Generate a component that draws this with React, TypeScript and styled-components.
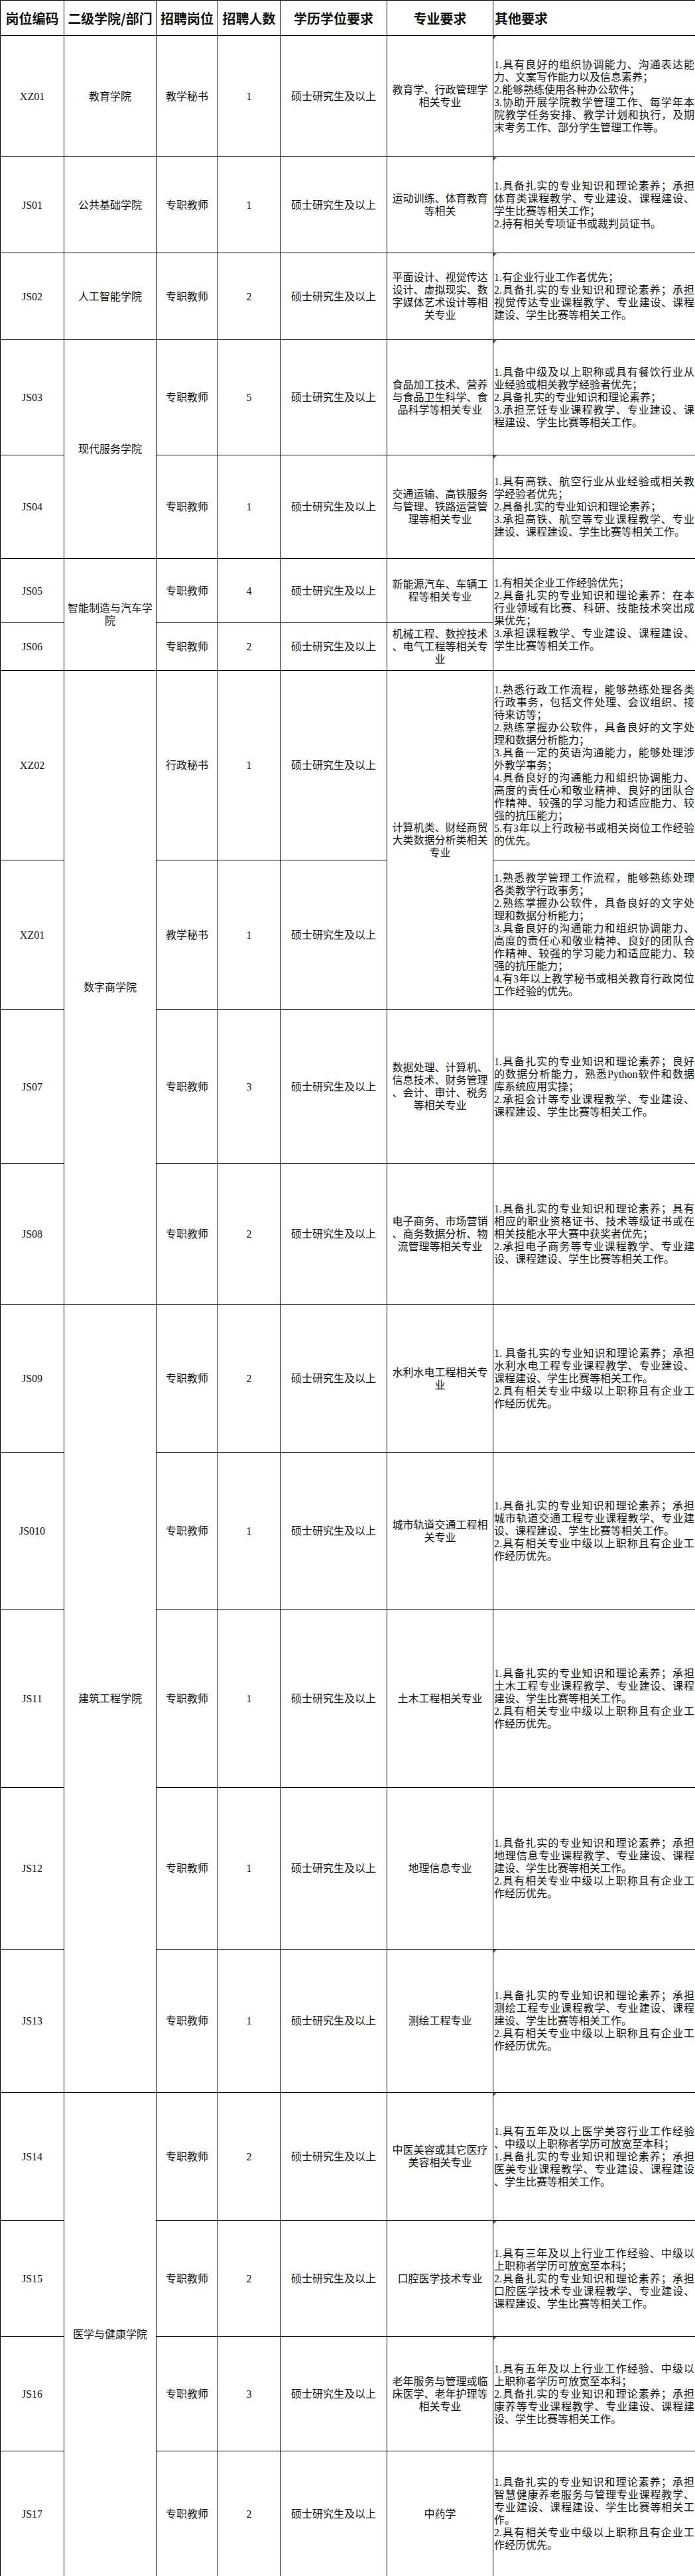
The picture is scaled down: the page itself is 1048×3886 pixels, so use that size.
import styled, { createGlobalStyle } from "styled-components";

const GlobalStyle = createGlobalStyle`
  html, body {
    margin: 0;
    padding: 0;
    background: #fff;
  }
  body {
    font-family: "Liberation Serif", "Noto Sans CJK SC", serif;
    color: #111;
  }
`;

const Sheet = styled.table`
  width: 1048px;
  border-collapse: collapse;
  table-layout: fixed;
  font-size: 16px;
  line-height: 19px;
`;

const Col = styled.col<{ $w: number }>`
  width: ${(p) => p.$w}px;
`;

const Row = styled.tr<{ $h: number }>`
  height: ${(p) => p.$h}px;
`;

const Head = styled.th<{ $left?: boolean }>`
  border: 1px solid #000;
  padding: 0 2px;
  font-family: "Noto Sans CJK SC", sans-serif;
  font-weight: 700;
  font-size: 20px;
  text-align: ${(p) => (p.$left ? "left" : "center")};
  vertical-align: middle;
  white-space: nowrap;
`;

const Cell = styled.td`
  border: 1px solid #000;
  padding: 0 2px;
  text-align: center;
  vertical-align: middle;
`;

const Other = styled(Cell)<{ $flag?: boolean }>`
  position: relative;
  padding: 0 1px;
  text-align: left;
  &::before {
    content: "";
    display: ${(p) => (p.$flag ? "block" : "none")};
    position: absolute;
    top: 0;
    left: 0;
    border-top: 5px solid #1e8a1e;
    border-right: 5px solid transparent;
  }
`;

const Line = styled.span<{ $full: boolean }>`
  display: block;
  text-align: ${(p) => (p.$full ? "justify" : "left")};
  text-align-last: ${(p) => (p.$full ? "justify" : "left")};
`;

interface IJob {
  code: string;
  post: string;
  count: number;
  h: number;
  college?: [string, number];
  major?: string[];
  majorSpan?: number;
  other?: string[];
  otherSpan?: number;
  flag?: boolean;
}

const S = "2.具有相关专业中级以上职称且有企业工";
const T = "作经历优先。";
const base = "1.具备扎实的专业知识和理论素养；承担";

const jobs: IJob[] = [
  {
    code: "XZ01", post: "教学秘书", count: 1, h: 183, college: ["教育学院", 1], flag: true,
    major: ["教育学、行政管理学", "相关专业"],
    other: [
      "1.具有良好的组织协调能力、沟通表达能",
      "力、文案写作能力以及信息素养；",
      "2.能够熟练使用各种办公软件；",
      "3.协助开展学院教学管理工作、每学年本",
      "院教学任务安排、教学计划和执行，及期",
      "末考务工作、部分学生管理工作等。",
    ],
  },
  {
    code: "JS01", post: "专职教师", count: 1, h: 145, college: ["公共基础学院", 1], flag: true,
    major: ["运动训练、体育教育", "等相关"],
    other: [base, "体育类课程教学、专业建设、课程建设、", "学生比赛等相关工作；", "2.持有相关专项证书或裁判员证书。"],
  },
  {
    code: "JS02", post: "专职教师", count: 2, h: 131, college: ["人工智能学院", 1], flag: true,
    major: ["平面设计、视觉传达", "设计、虚拟现实、数", "字媒体艺术设计等相", "关专业"],
    other: ["1.有企业行业工作者优先；", "2.具备扎实的专业知识和理论素养；承担", "视觉传达专业课程教学、专业建设、课程", "建设、学生比赛等相关工作。"],
  },
  {
    code: "JS03", post: "专职教师", count: 5, h: 174, college: ["现代服务学院", 2], flag: true,
    major: ["食品加工技术、营养", "与食品卫生科学、食", "品科学等相关专业"],
    other: [
      "1.具备中级及以上职称或具有餐饮行业从",
      "业经验或相关教学经验者优先；",
      "2.具备扎实的专业知识和理论素养；",
      "3.承担烹饪专业课程教学、专业建设、课",
      "程建设、学生比赛等相关工作。",
    ],
  },
  {
    code: "JS04", post: "专职教师", count: 1, h: 156, flag: true,
    major: ["交通运输、高铁服务", "与管理、铁路运营管", "理等相关专业"],
    other: [
      "1.具有高铁、航空行业从业经验或相关教",
      "学经验者优先；",
      "2.具备扎实的专业知识和理论素养；",
      "3.承担高铁、航空等专业课程教学、专业",
      "建设、课程建设、学生比赛等相关工作。",
    ],
  },
  {
    code: "JS05", post: "专职教师", count: 4, h: 97, college: ["智能制造与汽车学院", 2],
    major: ["新能源汽车、车辆工", "程等相关专业"],
    otherSpan: 2,
    other: [
      "1.有相关企业工作经验优先；",
      "2.具备扎实的专业知识和理论素养：在本",
      "行业领域有比赛、科研、技能技术突出成",
      "果优先；",
      "3.承担课程教学、专业建设、课程建设、",
      "学生比赛等相关工作。",
    ],
  },
  {
    code: "JS06", post: "专职教师", count: 2, h: 72,
    major: ["机械工程、数控技术", "、电气工程等相关专", "业"],
  },
  {
    code: "XZ02", post: "行政秘书", count: 1, h: 286, college: ["数字商学院", 4],
    majorSpan: 2,
    major: ["计算机类、财经商贸", "大类数据分析类相关", "专业"],
    other: [
      "1.熟悉行政工作流程，能够熟练处理各类",
      "行政事务，包括文件处理、会议组织、接",
      "待来访等；",
      "2.熟练掌握办公软件，具备良好的文字处",
      "理和数据分析能力；",
      "3.具备一定的英语沟通能力，能够处理涉",
      "外教学事务；",
      "4.具备良好的沟通能力和组织协调能力、",
      "高度的责任心和敬业精神、良好的团队合",
      "作精神、较强的学习能力和适应能力、较",
      "强的抗压能力；",
      "5.有3年以上行政秘书或相关岗位工作经验",
      "的优先。",
    ],
  },
  {
    code: "XZ01", post: "教学秘书", count: 1, h: 225,
    other: [
      "1.熟悉教学管理工作流程，能够熟练处理",
      "各类教学行政事务；",
      "2.熟练掌握办公软件，具备良好的文字处",
      "理和数据分析能力；",
      "3.具备良好的沟通能力和组织协调能力、",
      "高度的责任心和敬业精神、良好的团队合",
      "作精神、较强的学习能力和适应能力、较",
      "强的抗压能力；",
      "4.有3年以上教学秘书或相关教育行政岗位",
      "工作经验的优先。",
    ],
  },
  {
    code: "JS07", post: "专职教师", count: 3, h: 233,
    major: ["数据处理、计算机、", "信息技术、财务管理", "、会计、审计、税务", "等相关专业"],
    other: [
      "1.具备扎实的专业知识和理论素养；良好",
      "的数据分析能力，熟悉Python软件和数据",
      "库系统应用实操；",
      "2.承担会计等专业课程教学、专业建设、",
      "课程建设、学生比赛等相关工作。",
    ],
  },
  {
    code: "JS08", post: "专职教师", count: 2, h: 212,
    major: ["电子商务、市场营销", "、商务数据分析、物", "流管理等相关专业"],
    other: [
      "1.具备扎实的专业知识和理论素养；具有",
      "相应的职业资格证书、技术等级证书或在",
      "相关技能水平大赛中获奖者优先；",
      "2.承担电子商务等专业课程教学、专业建",
      "设、课程建设、学生比赛等相关工作。",
    ],
  },
  {
    code: "JS09", post: "专职教师", count: 2, h: 224, college: ["建筑工程学院", 5],
    major: ["水利水电工程相关专", "业"],
    other: ["1. 具备扎实的专业知识和理论素养；承担", "水利水电工程专业课程教学、专业建设、", "课程建设、学生比赛等相关工作。", S, T],
  },
  {
    code: "JS010", post: "专职教师", count: 1, h: 236,
    major: ["城市轨道交通工程相", "关专业"],
    other: [base, "城市轨道交通工程专业课程教学、专业建", "设、课程建设、学生比赛等相关工作。", S, T],
  },
  {
    code: "JS11", post: "专职教师", count: 1, h: 269,
    major: ["土木工程相关专业"],
    other: [base, "土木工程专业课程教学、专业建设、课程", "建设、学生比赛等相关工作。", S, T],
  },
  {
    code: "JS12", post: "专职教师", count: 1, h: 244,
    major: ["地理信息专业"],
    other: [base, "地理信息专业课程教学、专业建设、课程", "建设、学生比赛等相关工作。", S, T],
  },
  {
    code: "JS13", post: "专职教师", count: 1, h: 216, flag: true,
    major: ["测绘工程专业"],
    other: [base, "测绘工程专业课程教学、专业建设、课程", "建设、学生比赛等相关工作。", S, T],
  },
  {
    code: "JS14", post: "专职教师", count: 2, h: 193, college: ["医学与健康学院", 4], flag: true,
    major: ["中医美容或其它医疗", "美容相关专业"],
    other: [
      "1.具有五年及以上医学美容行业工作经验",
      "、中级以上职称者学历可放宽至本科；",
      base,
      "医美专业课程教学、专业建设、课程建设",
      "、学生比赛等相关工作。",
    ],
  },
  {
    code: "JS15", post: "专职教师", count: 2, h: 175, flag: true,
    major: ["口腔医学技术专业"],
    other: [
      "1.具有三年及以上行业工作经验、中级以",
      "上职称者学历可放宽至本科；",
      "2.具备扎实的专业知识和理论素养；承担",
      "口腔医学技术专业课程教学、专业建设、",
      "课程建设、学生比赛等相关工作。",
    ],
  },
  {
    code: "JS16", post: "专职教师", count: 3, h: 173, flag: true,
    major: ["老年服务与管理或临", "床医学、老年护理等", "相关专业"],
    other: [
      "1.具有五年及以上行业工作经验、中级以",
      "上职称者学历可放宽至本科；",
      "2.具备扎实的专业知识和理论素养；承担",
      "康养等专业课程教学、专业建设、课程建",
      "设、学生比赛等相关工作。",
    ],
  },
  {
    code: "JS17", post: "专职教师", count: 2, h: 189,
    major: ["中药学"],
    other: [
      base,
      "智慧健康养老服务与管理专业课程教学、",
      "专业建设、课程建设、学生比赛等相关工",
      "作。",
      S,
      T,
    ],
  },
];

const widths = [96, 139, 93, 94, 161, 160, 305];

// a wrapped line is stretched to the cell edge, the last line of an item is not
const isFull = (lines: string[], i: number) =>
  i < lines.length - 1 && !/^\d+\./.test(lines[i + 1]);

function App() {
  return (
    <>
      <GlobalStyle />
      <Sheet>
        <colgroup>
          {widths.map((w, i) => (
            <Col key={i} $w={w} />
          ))}
        </colgroup>
        <thead>
          <Row $h={53}>
            <Head>岗位编码</Head>
            <Head>二级学院/部门</Head>
            <Head>招聘岗位</Head>
            <Head>招聘人数</Head>
            <Head>学历学位要求</Head>
            <Head>专业要求</Head>
            <Head $left>其他要求</Head>
          </Row>
        </thead>
        <tbody>
          {jobs.map((job, idx) => (
            <Row key={idx} $h={job.h}>
              <Cell>{job.code}</Cell>
              {job.college && <Cell rowSpan={job.college[1]}>{job.college[0]}</Cell>}
              <Cell>{job.post}</Cell>
              <Cell>{job.count}</Cell>
              <Cell>硕士研究生及以上</Cell>
              {job.major && (
                <Cell rowSpan={job.majorSpan ?? 1}>
                  {job.major.map((m, i) => (
                    <div key={i}>{m}</div>
                  ))}
                </Cell>
              )}
              {job.other && (
                <Other rowSpan={job.otherSpan ?? 1} $flag={job.flag}>
                  {job.other.map((l, i) => (
                    <Line key={i} $full={isFull(job.other!, i)}>
                      {l}
                    </Line>
                  ))}
                </Other>
              )}
            </Row>
          ))}
        </tbody>
      </Sheet>
    </>
  );
}

export default App;
